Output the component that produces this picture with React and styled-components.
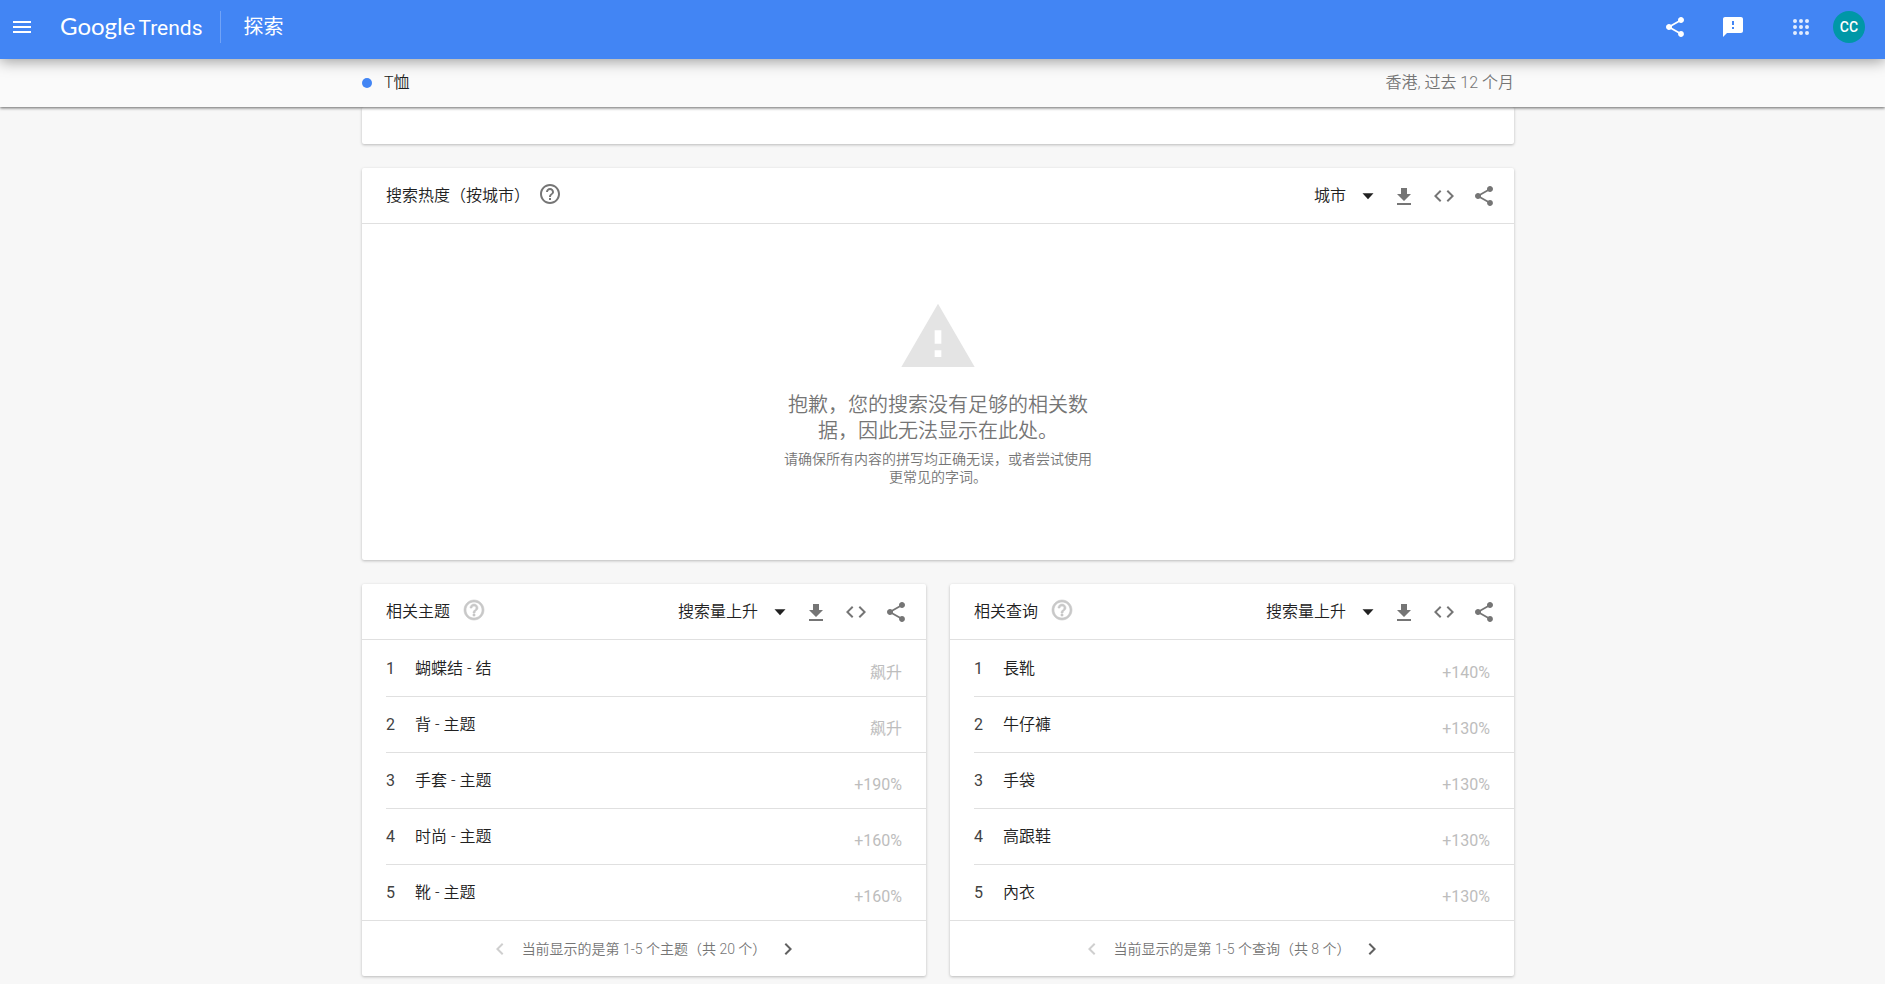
import React from "react";
import styled, { createGlobalStyle } from "styled-components";

const GlobalStyle = createGlobalStyle`
  *, *::before, *::after { box-sizing: border-box; }
  body {
    margin: 0;
    background: #f7f7f7;
    color: #212121;
    font-family: Roboto, "Noto Sans CJK SC", sans-serif;
    font-size: 16px;
    font-weight: 350;
    line-height: 24px;
  }
  button, select { font: inherit; color: inherit; }
`;

const paths = {
  menu: "M3 18h18v-2H3v2zm0-5h18v-2H3v2zm0-7v2h18V6H3z",
  share:
    "M18 16.08c-.76 0-1.44.3-1.96.77L8.91 12.7c.05-.23.09-.46.09-.7s-.04-.47-.09-.7l7.05-4.11c.54.5 1.25.81 2.04.81 1.66 0 3-1.34 3-3s-1.34-3-3-3-3 1.34-3 3c0 .24.04.47.09.7L8.04 9.81C7.5 9.31 6.79 9 6 9c-1.66 0-3 1.34-3 3s1.34 3 3 3c.79 0 1.5-.31 2.04-.81l7.12 4.16c-.05.21-.08.43-.08.65 0 1.61 1.31 2.92 2.92 2.92s2.92-1.31 2.92-2.92-1.31-2.92-2.92-2.92z",
  feedback:
    "M20 2H4c-1.1 0-1.99.9-1.99 2L2 22l4-4h14c1.1 0 2-.9 2-2V4c0-1.1-.9-2-2-2zm-7 12h-2v-2h2v2zm0-4h-2V6h2v4z",
  apps: "M6 8a2 2 0 1 0 0-4 2 2 0 0 0 0 4zm6 0a2 2 0 1 0 0-4 2 2 0 0 0 0 4zm6 0a2 2 0 1 0 0-4 2 2 0 0 0 0 4zM6 14a2 2 0 1 0 0-4 2 2 0 0 0 0 4zm6 0a2 2 0 1 0 0-4 2 2 0 0 0 0 4zm6 0a2 2 0 1 0 0-4 2 2 0 0 0 0 4zM6 20a2 2 0 1 0 0-4 2 2 0 0 0 0 4zm6 0a2 2 0 1 0 0-4 2 2 0 0 0 0 4zm6 0a2 2 0 1 0 0-4 2 2 0 0 0 0 4z",
  help: "M11 18h2v-2h-2v2zm1-16C6.48 2 2 6.48 2 12s4.48 10 10 10 10-4.48 10-10S17.52 2 12 2zm0 18c-4.41 0-8-3.59-8-8s3.59-8 8-8 8 3.59 8 8-3.59 8-8 8zm0-14c-2.21 0-4 1.79-4 4h2c0-1.1.9-2 2-2s2 .9 2 2c0 2-3 1.75-3 5h2c0-2.25 3-2.5 3-5 0-2.21-1.79-4-4-4z",
  download: "M19 10h-4V4H9v6H5l7 7 7-7zM5 19v2h14v-2H5z",
  code: "M9.4 16.6L4.8 12l4.6-4.6L8 6l-6 6 6 6 1.4-1.4zm5.2 0l4.6-4.6-4.6-4.6L16 6l6 6-6 6-1.4-1.4z",
  caret: "M6.5 9.2l5.5 6 5.5-6z",
  warning: "M1 21h22L12 2 1 21zm12-3h-2v-2h2v2zm0-4h-2v-4h2v4z",
  prev: "M15.41 7.41L14 6l-6 6 6 6 1.41-1.41L10.83 12z",
  next: "M10 6L8.59 7.41 13.17 12l-4.58 4.59L10 18l6-6z",
};

const Svg = styled.svg`
  display: block;
  flex: none;
  fill: currentColor;
`;

function Icon({ name, size = 24 }) {
  return (
    <Svg width={size} height={size} viewBox="0 0 24 24" aria-hidden="true">
      <path d={paths[name]} />
    </Svg>
  );
}

const TopBar = styled.header`
  position: relative;
  z-index: 2;
  display: flex;
  align-items: center;
  height: 59px;
  padding: 0 20px 5px 2px;
  background: #4285f4;
  color: #fff;
  box-shadow: 0 2px 14px rgba(0, 0, 0, 0.4);
`;

const IconButton = styled.button`
  display: flex;
  align-items: center;
  justify-content: center;
  width: 40px;
  height: 40px;
  padding: 0;
  border: 0;
  background: none;
  color: ${(p) => p.$color || "inherit"};
  cursor: pointer;
`;

const Logo = styled.a`
  display: flex;
  align-items: baseline;
  gap: 3px;
  margin-left: 18px;
  color: #fff;
  font-weight: 400;
  text-decoration: none;
`;

const LogoMain = styled.span`
  font-family: Lato, sans-serif;
  font-size: 24px;
`;

const LogoSub = styled.span`
  font-family: Roboto, sans-serif;
  font-size: 21px;
`;

const PageName = styled.h1`
  margin: 0 0 0 18px;
  padding-left: 22px;
  border-left: 1px solid rgba(255, 255, 255, 0.25);
  font-size: 20px;
  font-weight: 400;
  line-height: 32px;
`;

const TopActions = styled.div`
  display: flex;
  align-items: center;
  margin-left: auto;
`;

const ActionSlot = styled.div`
  margin-right: ${(p) => p.$gap}px;
`;

const Avatar = styled.button`
  width: 32px;
  height: 32px;
  padding: 0;
  border: 0;
  border-radius: 50%;
  background: #0097a7;
  color: #fff;
  font-family: Roboto, sans-serif;
  font-size: 14px;
  font-weight: 500;
`;

const SummaryBar = styled.div`
  position: relative;
  z-index: 1;
  padding-right: 9px;
  background: #fafafa;
  box-shadow: 0 1px 3px rgba(0, 0, 0, 0.6);
`;

const Column = styled.div`
  max-width: 1152px;
  margin: 0 auto;
`;

const Summary = styled(Column)`
  display: flex;
  align-items: center;
  justify-content: space-between;
  height: 48px;
`;

const Term = styled.span`
  display: flex;
  align-items: center;
  gap: 12px;

  &::before {
    content: "";
    width: 10px;
    height: 10px;
    border-radius: 50%;
    background: #4285f4;
  }
`;

const Scope = styled.span`
  color: #757575;
`;

const Page = styled.main`
  padding: 0 9px 8px 0;
`;

const Widgets = styled(Column)`
  display: grid;
  grid-template-columns: 1fr 1fr;
  gap: 24px;
`;

const Card = styled.section`
  grid-column: ${(p) => (p.$wide ? "1 / -1" : "auto")};
  border-radius: 2px;
  background: #fff;
  box-shadow: 0 1px 3px rgba(0, 0, 0, 0.25);
`;

const CardEnd = styled(Card)`
  height: 37px;
`;

const CardHeader = styled.div`
  display: flex;
  align-items: center;
  height: 56px;
  padding: 0 10px 0 24px;
  border-bottom: 1px solid #e0e0e0;
`;

const CardTitle = styled.h2`
  margin: 0;
  font-size: 16px;
  font-weight: 350;
`;

const HelpButton = styled(IconButton)`
  width: 24px;
  height: 28px;
  margin-left: ${(p) => (p.$faint ? 12 : 8)}px;
  align-items: flex-start;
  color: ${(p) => (p.$faint ? "#c8c8c8" : "#757575")};

  path {
    stroke: currentColor;
    stroke-width: ${(p) => (p.$faint ? 0.6 : 0)};
  }
`;

const Picker = styled.div`
  position: relative;
  margin-left: auto;

  svg {
    position: absolute;
    top: 0;
    right: 4px;
    pointer-events: none;
  }
`;

const Select = styled.select`
  display: block;
  height: 24px;
  padding: 0 37px 0 0;
  border: 0;
  background: none;
  appearance: none;
`;

const Empty = styled.div`
  display: flex;
  flex-direction: column;
  align-items: center;
  height: 336px;
  padding-top: 73px;
  color: #757575;
  text-align: center;
`;

const EmptyMark = styled.div`
  margin-bottom: 15px;
  color: #e4e4e4;
`;

const EmptyTitle = styled.p`
  width: 312px;
  margin: 0 0 6px;
  font-size: 20px;
  line-height: 26px;
`;

const EmptyHint = styled.p`
  width: 312px;
  margin: 0;
  font-size: 14px;
  line-height: 18px;
`;

const TableArea = styled.div`
  padding: 1px 0 0 24px;
`;

const Table = styled.table`
  width: 100%;
  border-spacing: 0;

  tr:not(:last-child) > * {
    height: 56px;
    border-bottom: 1px solid #e0e0e0;
  }

  tr:last-child > * {
    height: 55px;
  }
`;

const Rank = styled.td`
  width: 29px;
  padding: 0;
  font-weight: 400;
  color: #424242;
`;

const Name = styled.th`
  padding: 0;
  font-weight: 350;
  text-align: left;
`;

const Change = styled.td`
  padding: 8px 24px 0 0;
  color: #bdbdbd;
  font-weight: 400;
  text-align: right;
`;

const Pager = styled.nav`
  display: flex;
  align-items: center;
  justify-content: center;
  gap: 10px;
  height: 56px;
  border-top: 1px solid #e0e0e0;
  color: #757575;
  font-size: 14px;
`;

const PagerButton = styled(IconButton)`
  width: 24px;
  height: 24px;
  color: #616161;

  &:disabled {
    color: #cfcfcf;
  }
`;

function WidgetHeader({ title, option, faintHelp }) {
  return (
    <CardHeader>
      <CardTitle>{title}</CardTitle>
      <HelpButton $faint={faintHelp} aria-label="帮助">
        <Icon name="help" />
      </HelpButton>
      <Picker>
        <Select aria-label={title} defaultValue={option}>
          <option>{option}</option>
        </Select>
        <Icon name="caret" />
      </Picker>
      <IconButton $color="#757575" aria-label="下载">
        <Icon name="download" />
      </IconButton>
      <IconButton $color="#757575" aria-label="嵌入">
        <Icon name="code" />
      </IconButton>
      <IconButton $color="#757575" aria-label="分享">
        <Icon name="share" />
      </IconButton>
    </CardHeader>
  );
}

function RankingCard({ title, rows, status, lang }) {
  return (
    <Card>
      <WidgetHeader title={title} option="搜索量上升" faintHelp />
      <TableArea>
        <Table aria-label={title}>
          <tbody>
            {rows.map(([name, change], i) => (
              <tr key={name}>
                <Rank>{i + 1}</Rank>
                <Name scope="row" lang={lang}>
                  {name}
                </Name>
                <Change>{change}</Change>
              </tr>
            ))}
          </tbody>
        </Table>
      </TableArea>
      <Pager aria-label={title}>
        <PagerButton disabled aria-label="上一页">
          <Icon name="prev" />
        </PagerButton>
        <span>{status}</span>
        <PagerButton aria-label="下一页">
          <Icon name="next" />
        </PagerButton>
      </Pager>
    </Card>
  );
}

const topics = [
  ["蝴蝶结 - 结", "飙升"],
  ["背 - 主题", "飙升"],
  ["手套 - 主题", "+190%"],
  ["时尚 - 主题", "+160%"],
  ["靴 - 主题", "+160%"],
];

const queries = [
  ["長靴", "+140%"],
  ["牛仔褲", "+130%"],
  ["手袋", "+130%"],
  ["高跟鞋", "+130%"],
  ["內衣", "+130%"],
];

export default function App() {
  return (
    <>
      <GlobalStyle />
      <TopBar>
        <IconButton aria-label="菜单">
          <Icon name="menu" />
        </IconButton>
        <Logo href="#">
          <LogoMain>Google</LogoMain>
          <LogoSub>Trends</LogoSub>
        </Logo>
        <PageName>探索</PageName>
        <TopActions>
          <ActionSlot $gap={18}>
            <IconButton aria-label="分享">
              <Icon name="share" />
            </IconButton>
          </ActionSlot>
          <ActionSlot $gap={28}>
            <IconButton aria-label="发送反馈">
              <Icon name="feedback" />
            </IconButton>
          </ActionSlot>
          <ActionSlot $gap={12}>
            <IconButton aria-label="Google 应用" $color="rgba(255, 255, 255, 0.85)">
              <Icon name="apps" />
            </IconButton>
          </ActionSlot>
          <Avatar>CC</Avatar>
        </TopActions>
      </TopBar>
      <SummaryBar>
        <Summary>
          <Term>T恤</Term>
          <Scope>香港, 过去 12 个月</Scope>
        </Summary>
      </SummaryBar>
      <Page>
        <Widgets>
          <CardEnd $wide />
          <Card $wide>
            <WidgetHeader title="搜索热度（按城市）" option="城市" />
            <Empty>
              <EmptyMark>
                <Icon name="warning" size={80} />
              </EmptyMark>
              <EmptyTitle>抱歉，您的搜索没有足够的相关数据，因此无法显示在此处。</EmptyTitle>
              <EmptyHint>请确保所有内容的拼写均正确无误，或者尝试使用更常见的字词。</EmptyHint>
            </Empty>
          </Card>
          <RankingCard
            title="相关主题"
            rows={topics}
            status="当前显示的是第 1-5 个主题（共 20 个）"
          />
          <RankingCard
            title="相关查询"
            rows={queries}
            status="当前显示的是第 1-5 个查询（共 8 个）"
            lang="zh-Hant"
          />
        </Widgets>
      </Page>
    </>
  );
}
